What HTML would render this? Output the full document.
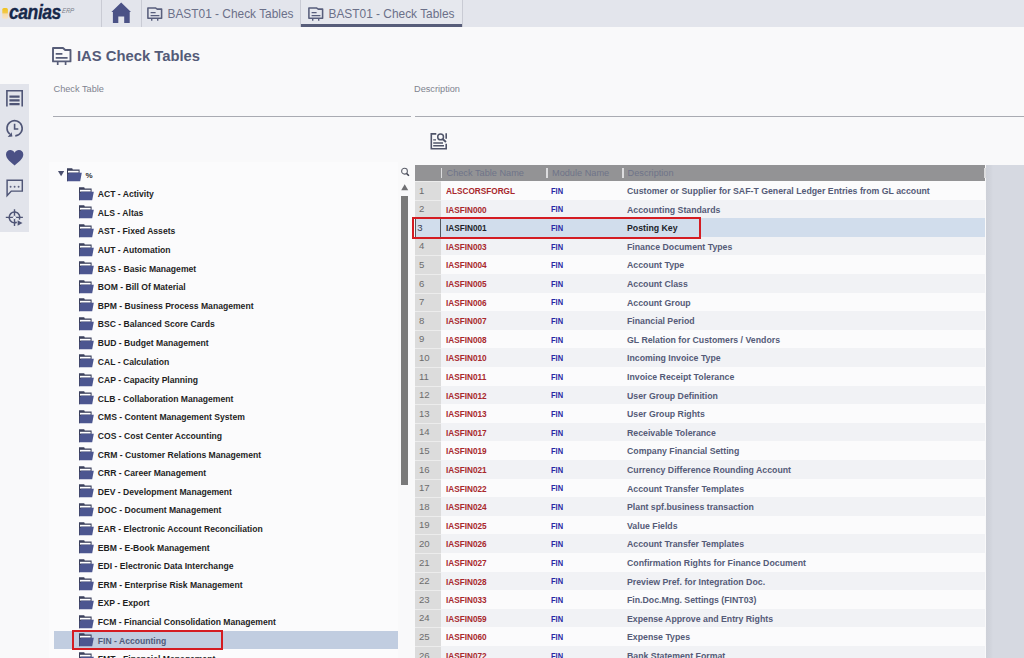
<!DOCTYPE html>
<html><head><meta charset="utf-8"><style>
*{margin:0;padding:0;box-sizing:border-box}
html,body{width:1024px;height:658px;overflow:hidden;background:#f9f9fa;font-family:"Liberation Sans",sans-serif}
.abs{position:absolute}
#topbar{position:absolute;left:0;top:0;width:1024px;height:27px;background:#e3e5ec}
.sep{position:absolute;top:0;width:1px;height:27px;background:#c9cbd4}
.tabtxt{position:absolute;top:6px;font-size:11.9px;color:#6b7089;white-space:nowrap;line-height:16px}
#title{position:absolute;left:77px;top:47px;font-size:14.8px;font-weight:bold;color:#545b78;white-space:nowrap;line-height:18px}
.lbl{position:absolute;top:83px;font-size:9.2px;color:#80838f;white-space:nowrap;line-height:12px}
.uline{position:absolute;top:116px;height:1px;background:#a9abb2}
#sidebar{position:absolute;left:0;top:84px;width:28.6px;height:148px;background:#e2e4eb}
#treepanel{position:absolute;left:49px;top:162px;width:349px;height:496px;background:#fbfbfc}
.tr{position:absolute;left:54px;width:344px;height:18.6px}
.tr .fd{position:absolute;left:25px;top:2.5px}
.tr span{position:absolute;left:43.8px;top:4px;font-size:8.6px;font-weight:bold;color:#1f1f1f;white-space:nowrap;line-height:12px}
#thumb{position:absolute;left:401.2px;top:196px;width:6.8px;height:289px;background:#7a7a7a}
#hdr{position:absolute;left:415px;top:165px;width:570px;height:16px;background:#939395}
.hsep{position:absolute;top:3px;width:1.8px;height:9.5px;background:#dcdcde}
.htxt{position:absolute;top:2px;font-size:9.2px;color:#6f7389;white-space:nowrap;line-height:12px}
#rightarea{position:absolute;left:986px;top:165px;width:38px;height:493px;background:linear-gradient(90deg,#cdd0d8 0,#d2d5dd 5px,#d6d9e1 7px)}
.row{position:absolute;left:415px;width:570px;height:18.6px;background:#fbfbfc}
.row.alt{background:#f1f2f5}
.row .num{position:absolute;left:0;top:0;width:26px;height:100%;background:#dcdcdc;border-top:1px solid #ececec}
.row .num span{position:absolute;left:4px;top:2.5px;font-size:9.6px;color:#6c6c6c;line-height:12px}
.row .c1{position:absolute;left:30.5px;top:4px;font-size:8.75px;font-weight:bold;color:#a8282c;white-space:nowrap;transform:scaleX(0.94);transform-origin:0 0;line-height:12px}
.row .c2{position:absolute;left:136px;top:3.9px;font-size:9.6px;font-weight:bold;color:#2828a4;white-space:nowrap;transform:scaleX(0.78);transform-origin:0 0;line-height:12px}
.row .c3{position:absolute;left:212px;top:4px;font-size:8.75px;font-weight:bold;color:#555b78;white-space:nowrap;line-height:12px}
.row.sel{background:#d1ddec}
.row.sel .num{background:#d1ddec;border-right:1px solid #55585f;border-left:1px solid #55585f;border-top:none}
.row.sel .num span{left:1.2px;top:3.4px;color:#3c4050}
.row.sel .c1,.row.sel .c3{color:#1d1f2a}
.redbox{position:absolute;border:2.5px solid #d41c22}
</style></head><body>
<div id="topbar"></div>

<svg class="abs" style="left:0;top:0" width="80" height="27" viewBox="0 0 80 27">
<defs><linearGradient id="yg" x1="0" y1="0" x2="0" y2="1"><stop offset="0" stop-color="#f0c21e"/><stop offset="0.45" stop-color="#f2c94a"/><stop offset="0.55" stop-color="#f5dcae"/><stop offset="1" stop-color="#f7e3c4"/></linearGradient></defs><rect x="2.3" y="8" width="5.6" height="10.8" rx="1.6" fill="url(#yg)"/>
</svg>
<div class="abs" style="left:9.3px;top:0.4px;font-size:21px;font-weight:bold;font-style:italic;color:#17284a;line-height:24px;transform:scaleX(0.84);transform-origin:0 0;letter-spacing:-0.6px;-webkit-text-stroke:0.35px #17284a">canias</div>
<div class="abs" style="left:62.8px;top:5.6px;font-size:7.2px;font-style:italic;color:#787b88;line-height:9px;transform:scaleX(0.8) skewX(-12deg);transform-origin:0 0">ERP</div>
<div class="sep" style="left:101px"></div>
<div class="sep" style="left:141px"></div>
<svg class="abs" style="left:110px;top:1px" width="23" height="23" viewBox="0 0 23 23">
<path d="M1.4 11L11.2 1.4L21 11H19.7V21.9H14.2V15.6H8.3V21.9H2.9V11Z" fill="#4b5286"/></svg>

<div class="abs" style="left:147.4px;top:7px;line-height:0"><svg width="16" height="14" viewBox="0 0 16 14"><path d="M0.9 0.9H8.4L10.2 2.1H14.6V11.3H0.9Z" fill="none" stroke="#585e7c" stroke-width="1.55" stroke-linejoin="round"/><path d="M3.6 5.6H8.6M3.6 8.6H12.4" stroke="#585e7c" stroke-width="1.4"/><path d="M4.7 11V13.8M10.7 11V13.8" stroke="#585e7c" stroke-width="1.4"/></svg></div>
<div class="tabtxt" style="left:167.5px">BAST01 - Check Tables</div>
<div class="abs" style="left:300px;top:0;width:163px;height:27px;border-left:1px solid #c9cbd4;border-right:1px solid #c9cbd4;background:#e6e8ee"></div>
<div class="abs" style="left:300.5px;top:24.4px;width:161.5px;height:2.3px;background:#575d79"></div>
<div class="abs" style="left:308.4px;top:7px;line-height:0"><svg width="16" height="14" viewBox="0 0 16 14"><path d="M0.9 0.9H8.4L10.2 2.1H14.6V11.3H0.9Z" fill="none" stroke="#585e7c" stroke-width="1.55" stroke-linejoin="round"/><path d="M3.6 5.6H8.6M3.6 8.6H12.4" stroke="#585e7c" stroke-width="1.4"/><path d="M4.7 11V13.8M10.7 11V13.8" stroke="#585e7c" stroke-width="1.4"/></svg></div>
<div class="tabtxt" style="left:328.5px">BAST01 - Check Tables</div>
<svg class="abs" style="left:52.2px;top:46.9px" width="19.5" height="18.2" viewBox="0 0 19.5 18.2"><path d="M1 1H11L13.2 3H18.5V14.4H1Z" fill="none" stroke="#575d78" stroke-width="1.9" stroke-linejoin="round"/><path d="M3.7 6.8H10.4M3.7 10.9H15.6M5.7 15V18.2M13.6 15V18.2" stroke="#575d78" stroke-width="1.7"/></svg>
<div id="title">IAS Check Tables</div>
<div class="lbl" style="left:53.5px">Check Table</div>
<div class="lbl" style="left:414px">Description</div>
<div class="uline" style="left:52.5px;width:358.5px"></div>
<div class="uline" style="left:414.5px;width:609.5px"></div>
<svg class="abs" style="left:429px;top:132px" width="20" height="19" viewBox="429 132 20 19">
<path d="M436.3 133.9H431.3V148.7H446.2V143.8M446.2 138.7V133.2" fill="none" stroke="#50556a" stroke-width="1.6"/>
<circle cx="440.6" cy="136.9" r="2.9" fill="none" stroke="#50556a" stroke-width="1.5"/>
<path d="M442.6 139L446 142" stroke="#50556a" stroke-width="1.9"/>
<path d="M433.2 139.9H436M433.2 143H443M433.2 145.8H444" stroke="#50556a" stroke-width="1.4"/>
</svg>

<div id="sidebar"></div>
<svg class="abs" style="left:0;top:84px" width="29" height="148" viewBox="0 84 29 148">
<path d="M6.9 106.6V90.8H22.2V106.6" fill="none" stroke="#4f5576" stroke-width="1.6"/>
<path d="M9.4 96.7H19.6M9.4 100.45H19.6M9.4 104.2H19.6" stroke="#4f5576" stroke-width="2.2"/>
<path d="M15.26 135.87A7.6 7.6 0 1 0 9.8 134.2" fill="none" stroke="#4f5576" stroke-width="1.6"/>
<path d="M7.7 137.1L11.6 132.2L12.4 136.5Z" fill="#4f5576"/>
<path d="M14.6 123.8V129H18.3" fill="none" stroke="#4f5576" stroke-width="1.6"/>
<path d="M14.6 165.6C11 162.5 6 159 6 154.6C6 151.8 8 150.1 10.3 150.1C12.2 150.1 13.7 151.2 14.6 152.7C15.5 151.2 17 150.1 18.9 150.1C21.3 150.1 23.3 151.8 23.3 154.6C23.3 159 18.2 162.5 14.6 165.6Z" fill="#4b5185"/>
<path d="M7.1 195.6V180.3H22.3V191.1H11.3Z" fill="none" stroke="#4f5576" stroke-width="1.45" stroke-linejoin="miter"/>
<circle cx="10.6" cy="186.8" r="0.95" fill="#5d6380"/><circle cx="14.6" cy="186.8" r="0.95" fill="#5d6380"/><circle cx="18.6" cy="186.8" r="0.95" fill="#5d6380"/>
<path d="M19.35 219.66A5.35 5.35 0 1 0 16.76 222.25" fill="none" stroke="#4f5576" stroke-width="1.5"/>
<path d="M5.8 217.4H22.9M14.5 209.2V226" stroke="#4f5576" stroke-width="1.4"/>
<path d="M14.5 215.6L16.3 217.4L14.5 219.2L12.7 217.4Z" fill="#e2e4eb"/><path d="M14.5 216.4L15.5 217.4L14.5 218.4L13.5 217.4Z" fill="#f0f0f8"/>
<path d="M17.6 220.3V225.8L22.5 223Z" fill="#4f5576"/>
</svg>

<div id="treepanel"></div>
<svg class="abs" style="left:58px;top:171.3px" width="7" height="6" viewBox="0 0 7 6"><path d="M0 0H6.2L3.1 5.2Z" fill="#4a4f6e"/></svg>
<div class="abs" style="left:67px;top:168.2px"><svg width="15" height="14" viewBox="0 0 15 14"><path d="M0 0.2H5.2L5.8 1.4H12.6V6H0Z" fill="#3b405c"/><rect x="1" y="2.8" width="10.6" height="1.8" fill="#fff"/><path d="M2.2 4.7H14.8L13.2 13.3H0V6H1.5Z" fill="#4c5690"/><path d="M0 1V13.3" stroke="#3b405c" stroke-width="1.3"/></svg></div>
<div class="abs" style="left:85.6px;top:169.8px;font-size:8px;font-weight:bold;color:#2a2a2a;line-height:12px">%</div>
<div class="tr" style="top:184.20px"><div style="position:absolute;left:25px;top:2.5px"><svg width="15" height="14" viewBox="0 0 15 14"><path d="M0 0.2H5.2L5.8 1.4H12.6V6H0Z" fill="#3b405c"/><rect x="1" y="2.8" width="10.6" height="1.8" fill="#fff"/><path d="M2.2 4.7H14.8L13.2 13.3H0V6H1.5Z" fill="#4c5690"/><path d="M0 1V13.3" stroke="#3b405c" stroke-width="1.3"/></svg></div><span>ACT - Activity</span></div>
<div class="tr" style="top:202.80px"><div style="position:absolute;left:25px;top:2.5px"><svg width="15" height="14" viewBox="0 0 15 14"><path d="M0 0.2H5.2L5.8 1.4H12.6V6H0Z" fill="#3b405c"/><rect x="1" y="2.8" width="10.6" height="1.8" fill="#fff"/><path d="M2.2 4.7H14.8L13.2 13.3H0V6H1.5Z" fill="#4c5690"/><path d="M0 1V13.3" stroke="#3b405c" stroke-width="1.3"/></svg></div><span>ALS - Altas</span></div>
<div class="tr" style="top:221.40px"><div style="position:absolute;left:25px;top:2.5px"><svg width="15" height="14" viewBox="0 0 15 14"><path d="M0 0.2H5.2L5.8 1.4H12.6V6H0Z" fill="#3b405c"/><rect x="1" y="2.8" width="10.6" height="1.8" fill="#fff"/><path d="M2.2 4.7H14.8L13.2 13.3H0V6H1.5Z" fill="#4c5690"/><path d="M0 1V13.3" stroke="#3b405c" stroke-width="1.3"/></svg></div><span>AST - Fixed Assets</span></div>
<div class="tr" style="top:240.00px"><div style="position:absolute;left:25px;top:2.5px"><svg width="15" height="14" viewBox="0 0 15 14"><path d="M0 0.2H5.2L5.8 1.4H12.6V6H0Z" fill="#3b405c"/><rect x="1" y="2.8" width="10.6" height="1.8" fill="#fff"/><path d="M2.2 4.7H14.8L13.2 13.3H0V6H1.5Z" fill="#4c5690"/><path d="M0 1V13.3" stroke="#3b405c" stroke-width="1.3"/></svg></div><span>AUT - Automation</span></div>
<div class="tr" style="top:258.60px"><div style="position:absolute;left:25px;top:2.5px"><svg width="15" height="14" viewBox="0 0 15 14"><path d="M0 0.2H5.2L5.8 1.4H12.6V6H0Z" fill="#3b405c"/><rect x="1" y="2.8" width="10.6" height="1.8" fill="#fff"/><path d="M2.2 4.7H14.8L13.2 13.3H0V6H1.5Z" fill="#4c5690"/><path d="M0 1V13.3" stroke="#3b405c" stroke-width="1.3"/></svg></div><span>BAS - Basic Managemet</span></div>
<div class="tr" style="top:277.20px"><div style="position:absolute;left:25px;top:2.5px"><svg width="15" height="14" viewBox="0 0 15 14"><path d="M0 0.2H5.2L5.8 1.4H12.6V6H0Z" fill="#3b405c"/><rect x="1" y="2.8" width="10.6" height="1.8" fill="#fff"/><path d="M2.2 4.7H14.8L13.2 13.3H0V6H1.5Z" fill="#4c5690"/><path d="M0 1V13.3" stroke="#3b405c" stroke-width="1.3"/></svg></div><span>BOM - Bill Of Material</span></div>
<div class="tr" style="top:295.80px"><div style="position:absolute;left:25px;top:2.5px"><svg width="15" height="14" viewBox="0 0 15 14"><path d="M0 0.2H5.2L5.8 1.4H12.6V6H0Z" fill="#3b405c"/><rect x="1" y="2.8" width="10.6" height="1.8" fill="#fff"/><path d="M2.2 4.7H14.8L13.2 13.3H0V6H1.5Z" fill="#4c5690"/><path d="M0 1V13.3" stroke="#3b405c" stroke-width="1.3"/></svg></div><span>BPM - Business Process Management</span></div>
<div class="tr" style="top:314.40px"><div style="position:absolute;left:25px;top:2.5px"><svg width="15" height="14" viewBox="0 0 15 14"><path d="M0 0.2H5.2L5.8 1.4H12.6V6H0Z" fill="#3b405c"/><rect x="1" y="2.8" width="10.6" height="1.8" fill="#fff"/><path d="M2.2 4.7H14.8L13.2 13.3H0V6H1.5Z" fill="#4c5690"/><path d="M0 1V13.3" stroke="#3b405c" stroke-width="1.3"/></svg></div><span>BSC - Balanced Score Cards</span></div>
<div class="tr" style="top:333.00px"><div style="position:absolute;left:25px;top:2.5px"><svg width="15" height="14" viewBox="0 0 15 14"><path d="M0 0.2H5.2L5.8 1.4H12.6V6H0Z" fill="#3b405c"/><rect x="1" y="2.8" width="10.6" height="1.8" fill="#fff"/><path d="M2.2 4.7H14.8L13.2 13.3H0V6H1.5Z" fill="#4c5690"/><path d="M0 1V13.3" stroke="#3b405c" stroke-width="1.3"/></svg></div><span>BUD - Budget Management</span></div>
<div class="tr" style="top:351.60px"><div style="position:absolute;left:25px;top:2.5px"><svg width="15" height="14" viewBox="0 0 15 14"><path d="M0 0.2H5.2L5.8 1.4H12.6V6H0Z" fill="#3b405c"/><rect x="1" y="2.8" width="10.6" height="1.8" fill="#fff"/><path d="M2.2 4.7H14.8L13.2 13.3H0V6H1.5Z" fill="#4c5690"/><path d="M0 1V13.3" stroke="#3b405c" stroke-width="1.3"/></svg></div><span>CAL - Calculation</span></div>
<div class="tr" style="top:370.20px"><div style="position:absolute;left:25px;top:2.5px"><svg width="15" height="14" viewBox="0 0 15 14"><path d="M0 0.2H5.2L5.8 1.4H12.6V6H0Z" fill="#3b405c"/><rect x="1" y="2.8" width="10.6" height="1.8" fill="#fff"/><path d="M2.2 4.7H14.8L13.2 13.3H0V6H1.5Z" fill="#4c5690"/><path d="M0 1V13.3" stroke="#3b405c" stroke-width="1.3"/></svg></div><span>CAP - Capacity Planning</span></div>
<div class="tr" style="top:388.80px"><div style="position:absolute;left:25px;top:2.5px"><svg width="15" height="14" viewBox="0 0 15 14"><path d="M0 0.2H5.2L5.8 1.4H12.6V6H0Z" fill="#3b405c"/><rect x="1" y="2.8" width="10.6" height="1.8" fill="#fff"/><path d="M2.2 4.7H14.8L13.2 13.3H0V6H1.5Z" fill="#4c5690"/><path d="M0 1V13.3" stroke="#3b405c" stroke-width="1.3"/></svg></div><span>CLB - Collaboration Management</span></div>
<div class="tr" style="top:407.40px"><div style="position:absolute;left:25px;top:2.5px"><svg width="15" height="14" viewBox="0 0 15 14"><path d="M0 0.2H5.2L5.8 1.4H12.6V6H0Z" fill="#3b405c"/><rect x="1" y="2.8" width="10.6" height="1.8" fill="#fff"/><path d="M2.2 4.7H14.8L13.2 13.3H0V6H1.5Z" fill="#4c5690"/><path d="M0 1V13.3" stroke="#3b405c" stroke-width="1.3"/></svg></div><span>CMS - Content Management System</span></div>
<div class="tr" style="top:426.00px"><div style="position:absolute;left:25px;top:2.5px"><svg width="15" height="14" viewBox="0 0 15 14"><path d="M0 0.2H5.2L5.8 1.4H12.6V6H0Z" fill="#3b405c"/><rect x="1" y="2.8" width="10.6" height="1.8" fill="#fff"/><path d="M2.2 4.7H14.8L13.2 13.3H0V6H1.5Z" fill="#4c5690"/><path d="M0 1V13.3" stroke="#3b405c" stroke-width="1.3"/></svg></div><span>COS - Cost Center Accounting</span></div>
<div class="tr" style="top:444.60px"><div style="position:absolute;left:25px;top:2.5px"><svg width="15" height="14" viewBox="0 0 15 14"><path d="M0 0.2H5.2L5.8 1.4H12.6V6H0Z" fill="#3b405c"/><rect x="1" y="2.8" width="10.6" height="1.8" fill="#fff"/><path d="M2.2 4.7H14.8L13.2 13.3H0V6H1.5Z" fill="#4c5690"/><path d="M0 1V13.3" stroke="#3b405c" stroke-width="1.3"/></svg></div><span>CRM - Customer Relations Management</span></div>
<div class="tr" style="top:463.20px"><div style="position:absolute;left:25px;top:2.5px"><svg width="15" height="14" viewBox="0 0 15 14"><path d="M0 0.2H5.2L5.8 1.4H12.6V6H0Z" fill="#3b405c"/><rect x="1" y="2.8" width="10.6" height="1.8" fill="#fff"/><path d="M2.2 4.7H14.8L13.2 13.3H0V6H1.5Z" fill="#4c5690"/><path d="M0 1V13.3" stroke="#3b405c" stroke-width="1.3"/></svg></div><span>CRR - Career Management</span></div>
<div class="tr" style="top:481.80px"><div style="position:absolute;left:25px;top:2.5px"><svg width="15" height="14" viewBox="0 0 15 14"><path d="M0 0.2H5.2L5.8 1.4H12.6V6H0Z" fill="#3b405c"/><rect x="1" y="2.8" width="10.6" height="1.8" fill="#fff"/><path d="M2.2 4.7H14.8L13.2 13.3H0V6H1.5Z" fill="#4c5690"/><path d="M0 1V13.3" stroke="#3b405c" stroke-width="1.3"/></svg></div><span>DEV - Development Management</span></div>
<div class="tr" style="top:500.40px"><div style="position:absolute;left:25px;top:2.5px"><svg width="15" height="14" viewBox="0 0 15 14"><path d="M0 0.2H5.2L5.8 1.4H12.6V6H0Z" fill="#3b405c"/><rect x="1" y="2.8" width="10.6" height="1.8" fill="#fff"/><path d="M2.2 4.7H14.8L13.2 13.3H0V6H1.5Z" fill="#4c5690"/><path d="M0 1V13.3" stroke="#3b405c" stroke-width="1.3"/></svg></div><span>DOC - Document Management</span></div>
<div class="tr" style="top:519.00px"><div style="position:absolute;left:25px;top:2.5px"><svg width="15" height="14" viewBox="0 0 15 14"><path d="M0 0.2H5.2L5.8 1.4H12.6V6H0Z" fill="#3b405c"/><rect x="1" y="2.8" width="10.6" height="1.8" fill="#fff"/><path d="M2.2 4.7H14.8L13.2 13.3H0V6H1.5Z" fill="#4c5690"/><path d="M0 1V13.3" stroke="#3b405c" stroke-width="1.3"/></svg></div><span>EAR - Electronic Account Reconciliation</span></div>
<div class="tr" style="top:537.60px"><div style="position:absolute;left:25px;top:2.5px"><svg width="15" height="14" viewBox="0 0 15 14"><path d="M0 0.2H5.2L5.8 1.4H12.6V6H0Z" fill="#3b405c"/><rect x="1" y="2.8" width="10.6" height="1.8" fill="#fff"/><path d="M2.2 4.7H14.8L13.2 13.3H0V6H1.5Z" fill="#4c5690"/><path d="M0 1V13.3" stroke="#3b405c" stroke-width="1.3"/></svg></div><span>EBM - E-Book Management</span></div>
<div class="tr" style="top:556.20px"><div style="position:absolute;left:25px;top:2.5px"><svg width="15" height="14" viewBox="0 0 15 14"><path d="M0 0.2H5.2L5.8 1.4H12.6V6H0Z" fill="#3b405c"/><rect x="1" y="2.8" width="10.6" height="1.8" fill="#fff"/><path d="M2.2 4.7H14.8L13.2 13.3H0V6H1.5Z" fill="#4c5690"/><path d="M0 1V13.3" stroke="#3b405c" stroke-width="1.3"/></svg></div><span>EDI - Electronic Data Interchange</span></div>
<div class="tr" style="top:574.80px"><div style="position:absolute;left:25px;top:2.5px"><svg width="15" height="14" viewBox="0 0 15 14"><path d="M0 0.2H5.2L5.8 1.4H12.6V6H0Z" fill="#3b405c"/><rect x="1" y="2.8" width="10.6" height="1.8" fill="#fff"/><path d="M2.2 4.7H14.8L13.2 13.3H0V6H1.5Z" fill="#4c5690"/><path d="M0 1V13.3" stroke="#3b405c" stroke-width="1.3"/></svg></div><span>ERM - Enterprise Risk Management</span></div>
<div class="tr" style="top:593.40px"><div style="position:absolute;left:25px;top:2.5px"><svg width="15" height="14" viewBox="0 0 15 14"><path d="M0 0.2H5.2L5.8 1.4H12.6V6H0Z" fill="#3b405c"/><rect x="1" y="2.8" width="10.6" height="1.8" fill="#fff"/><path d="M2.2 4.7H14.8L13.2 13.3H0V6H1.5Z" fill="#4c5690"/><path d="M0 1V13.3" stroke="#3b405c" stroke-width="1.3"/></svg></div><span>EXP - Export</span></div>
<div class="tr" style="top:612.00px"><div style="position:absolute;left:25px;top:2.5px"><svg width="15" height="14" viewBox="0 0 15 14"><path d="M0 0.2H5.2L5.8 1.4H12.6V6H0Z" fill="#3b405c"/><rect x="1" y="2.8" width="10.6" height="1.8" fill="#fff"/><path d="M2.2 4.7H14.8L13.2 13.3H0V6H1.5Z" fill="#4c5690"/><path d="M0 1V13.3" stroke="#3b405c" stroke-width="1.3"/></svg></div><span>FCM - Financial Consolidation Management</span></div>
<div class="tr" style="top:630.60px;background:#c1cde0"><div style="position:absolute;left:25px;top:2.5px"><svg width="15" height="14" viewBox="0 0 15 14"><path d="M0 0.2H5.2L5.8 1.4H12.6V6H0Z" fill="#3b405c"/><rect x="1" y="2.8" width="10.6" height="1.8" fill="#fff"/><path d="M2.2 4.7H14.8L13.2 13.3H0V6H1.5Z" fill="#4c5690"/><path d="M0 1V13.3" stroke="#3b405c" stroke-width="1.3"/></svg></div><span style="color:#4f5b7b">FIN - Accounting</span></div>
<div class="tr" style="top:649.20px"><div style="position:absolute;left:25px;top:2.5px"><svg width="15" height="14" viewBox="0 0 15 14"><path d="M0 0.2H5.2L5.8 1.4H12.6V6H0Z" fill="#3b405c"/><rect x="1" y="2.8" width="10.6" height="1.8" fill="#fff"/><path d="M2.2 4.7H14.8L13.2 13.3H0V6H1.5Z" fill="#4c5690"/><path d="M0 1V13.3" stroke="#3b405c" stroke-width="1.3"/></svg></div><span>FMT - Financial Management</span></div>
<div class="redbox" style="left:72.3px;top:630.2px;width:150.5px;height:20.3px"></div>
<svg class="abs" style="left:400px;top:166.5px" width="11" height="11" viewBox="0 0 11 11"><circle cx="4.5" cy="4.2" r="2.9" fill="none" stroke="#5d606c" stroke-width="1.05"/><path d="M6.6 6.4L8.9 8.8" stroke="#3e4150" stroke-width="1.5"/></svg>
<svg class="abs" style="left:401px;top:184px" width="8" height="7" viewBox="0 0 8 7"><path d="M0.2 6.2H7.2L3.7 0.2Z" fill="#6f6f72"/></svg>
<div id="thumb"></div>

<div id="rightarea"></div>
<div id="hdr"><div class="hsep" style="left:25.7px"></div><div class="hsep" style="left:131px"></div><div class="hsep" style="left:207.3px"></div><div class="hsep" style="left:569px"></div><div class="htxt" style="left:31.5px">Check Table Name</div><div class="htxt" style="left:137px">Module Name</div><div class="htxt" style="left:212.6px">Description</div></div>
<div class="row" style="top:181.00px"><div class="num"><span>1</span></div><div class="c1">ALSCORSFORGL</div><div class="c2">FIN</div><div class="c3">Customer or Supplier for SAF-T General Ledger Entries from GL account</div></div>
<div class="row alt" style="top:199.60px"><div class="num"><span>2</span></div><div class="c1">IASFIN000</div><div class="c2">FIN</div><div class="c3">Accounting Standards</div></div>
<div class="row sel" style="top:218.20px"><div class="num"><span>3</span></div><div class="c1">IASFIN001</div><div class="c2">FIN</div><div class="c3">Posting Key</div></div>
<div class="row alt" style="top:236.80px"><div class="num"><span>4</span></div><div class="c1">IASFIN003</div><div class="c2">FIN</div><div class="c3">Finance Document Types</div></div>
<div class="row" style="top:255.40px"><div class="num"><span>5</span></div><div class="c1">IASFIN004</div><div class="c2">FIN</div><div class="c3">Account Type</div></div>
<div class="row alt" style="top:274.00px"><div class="num"><span>6</span></div><div class="c1">IASFIN005</div><div class="c2">FIN</div><div class="c3">Account Class</div></div>
<div class="row" style="top:292.60px"><div class="num"><span>7</span></div><div class="c1">IASFIN006</div><div class="c2">FIN</div><div class="c3">Account Group</div></div>
<div class="row alt" style="top:311.20px"><div class="num"><span>8</span></div><div class="c1">IASFIN007</div><div class="c2">FIN</div><div class="c3">Financial Period</div></div>
<div class="row" style="top:329.80px"><div class="num"><span>9</span></div><div class="c1">IASFIN008</div><div class="c2">FIN</div><div class="c3">GL Relation for Customers / Vendors</div></div>
<div class="row alt" style="top:348.40px"><div class="num"><span>10</span></div><div class="c1">IASFIN010</div><div class="c2">FIN</div><div class="c3">Incoming Invoice Type</div></div>
<div class="row" style="top:367.00px"><div class="num"><span>11</span></div><div class="c1">IASFIN011</div><div class="c2">FIN</div><div class="c3">Invoice Receipt Tolerance</div></div>
<div class="row alt" style="top:385.60px"><div class="num"><span>12</span></div><div class="c1">IASFIN012</div><div class="c2">FIN</div><div class="c3">User Group Definition</div></div>
<div class="row" style="top:404.20px"><div class="num"><span>13</span></div><div class="c1">IASFIN013</div><div class="c2">FIN</div><div class="c3">User Group Rights</div></div>
<div class="row alt" style="top:422.80px"><div class="num"><span>14</span></div><div class="c1">IASFIN017</div><div class="c2">FIN</div><div class="c3">Receivable Tolerance</div></div>
<div class="row" style="top:441.40px"><div class="num"><span>15</span></div><div class="c1">IASFIN019</div><div class="c2">FIN</div><div class="c3">Company Financial Setting</div></div>
<div class="row alt" style="top:460.00px"><div class="num"><span>16</span></div><div class="c1">IASFIN021</div><div class="c2">FIN</div><div class="c3">Currency Difference Rounding Account</div></div>
<div class="row" style="top:478.60px"><div class="num"><span>17</span></div><div class="c1">IASFIN022</div><div class="c2">FIN</div><div class="c3">Account Transfer Templates</div></div>
<div class="row alt" style="top:497.20px"><div class="num"><span>18</span></div><div class="c1">IASFIN024</div><div class="c2">FIN</div><div class="c3">Plant spf.business transaction</div></div>
<div class="row" style="top:515.80px"><div class="num"><span>19</span></div><div class="c1">IASFIN025</div><div class="c2">FIN</div><div class="c3">Value Fields</div></div>
<div class="row alt" style="top:534.40px"><div class="num"><span>20</span></div><div class="c1">IASFIN026</div><div class="c2">FIN</div><div class="c3">Account Transfer Templates</div></div>
<div class="row" style="top:553.00px"><div class="num"><span>21</span></div><div class="c1">IASFIN027</div><div class="c2">FIN</div><div class="c3">Confirmation Rights for Finance Document</div></div>
<div class="row alt" style="top:571.60px"><div class="num"><span>22</span></div><div class="c1">IASFIN028</div><div class="c2">FIN</div><div class="c3">Preview Pref. for Integration Doc.</div></div>
<div class="row" style="top:590.20px"><div class="num"><span>23</span></div><div class="c1">IASFIN033</div><div class="c2">FIN</div><div class="c3">Fin.Doc.Mng. Settings (FINT03)</div></div>
<div class="row alt" style="top:608.80px"><div class="num"><span>24</span></div><div class="c1">IASFIN059</div><div class="c2">FIN</div><div class="c3">Expense Approve and Entry Rights</div></div>
<div class="row" style="top:627.40px"><div class="num"><span>25</span></div><div class="c1">IASFIN060</div><div class="c2">FIN</div><div class="c3">Expense Types</div></div>
<div class="row alt" style="top:646.00px"><div class="num"><span>26</span></div><div class="c1">IASFIN072</div><div class="c2">FIN</div><div class="c3">Bank Statement Format</div></div>
<div class="redbox" style="left:412.2px;top:217.4px;width:288.7px;height:21.2px"></div>
</body></html>
